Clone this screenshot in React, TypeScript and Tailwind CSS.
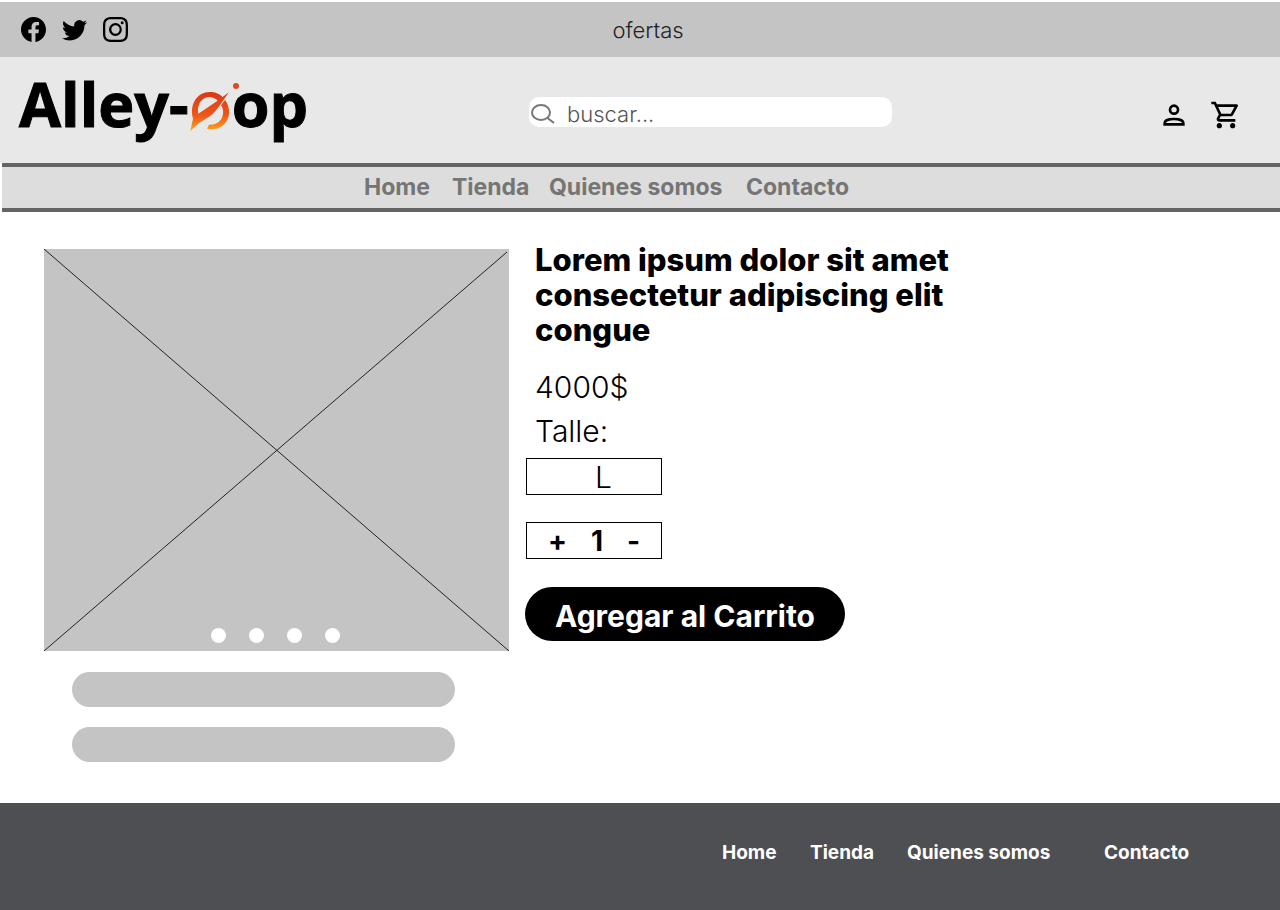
import { BsFacebook, BsInstagram, BsTwitter } from "react-icons/bs";
import { MdOutlineShoppingCart } from "react-icons/md";

const links = ["Home", "Tienda", "Quienes somos", "Contacto"];
const slides = [1, 2, 3, 4];

function Logo() {
  return (
    <a
      href="#"
      aria-label="Alley-oop"
      className="flex items-start font-['Open_Sans',sans-serif] text-[61px] leading-[84px] font-bold text-black [-webkit-text-stroke:1px_black]"
    >
      <span>Alley-</span>
      <svg viewBox="12 0 129 180" className="mt-[14px] h-[60px] w-[43px] shrink-0 overflow-visible" aria-hidden="true">
        <defs>
          <linearGradient id="flame" gradientUnits="userSpaceOnUse" x1="0" y1="48" x2="0" y2="166">
            <stop offset="0" stopColor="#dc3614" />
            <stop offset="0.6" stopColor="#f0571a" />
            <stop offset="1" stopColor="#f9a81c" />
          </linearGradient>
        </defs>
        <path
          fill="url(#flame)"
          d="M16 166 L24 128 C12 84 38 48 74 48 C92 48 104 54 113 63 L131 49 C112 78 100 96 84 113 C68 128 40 136 16 166 Z M40 113 L98 74 C86 62 68 60 56 68 C42 78 36 94 40 113 Z"
        />
        <path
          fill="url(#flame)"
          d="M120 72 C138 96 136 128 116 146 C102 159 84 162 66 158 L72 146 C92 146 106 138 112 122 C117 108 114 96 108 88 Z"
        />
        <circle cx="153" cy="30" r="9" fill="#dc4a20" />
      </svg>
      <span>op</span>
    </a>
  );
}

function PersonIcon() {
  return (
    <svg viewBox="0 0 24 24" className="size-8" fill="none" stroke="currentColor" strokeWidth="2" aria-hidden="true">
      <circle cx="12" cy="8" r="3" />
      <path d="M5 19 V18 C5 16 8.500 15 12 15 C15.500 15 19 16 19 18 V19 Z" />
    </svg>
  );
}

export default function App() {
  return (
    <div className="flex min-h-screen flex-col bg-white pt-[2px] font-[Inter,sans-serif] text-black">
      <div className="grid h-[55px] grid-cols-[1fr_auto_1fr] items-center bg-[#c4c4c4] px-[21px]">
        <div className="flex gap-4">
          <a href="#" aria-label="Facebook"><BsFacebook className="size-[25px]" /></a>
          <a href="#" aria-label="Twitter"><BsTwitter className="size-[25px]" /></a>
          <a href="#" aria-label="Instagram"><BsInstagram className="size-[25px]" /></a>
        </div>
        <p className="pt-[2px] pl-4 text-[22px] font-light text-[#222]">ofertas</p>
      </div>

      <header className="flex h-[106px] items-center bg-[#e8e8e8] pr-[38px] pl-[19px]">
        <div className="w-[510px] self-start pt-[5px]"><Logo /></div>
        <label className="mt-1 flex h-[30px] w-[363px] items-center gap-3 rounded-[10px] bg-white px-[2px]">
          <svg viewBox="0 0 24 20" className="mt-1 h-5 w-6 shrink-0" fill="none" stroke="#777" strokeWidth="2" aria-hidden="true">
            <ellipse cx="10" cy="8.500" rx="9" ry="7.500" />
            <path d="M16.500 14 L23 19" />
          </svg>
          <input
            type="search"
            aria-label="buscar"
            placeholder="buscar..."
            className="h-[30px] min-w-0 flex-1 bg-transparent pt-1 text-[22px] font-light outline-none placeholder:text-[#555]"
          />
        </label>
        <div className="mt-[10px] ml-auto flex items-center gap-5">
          <a href="#" aria-label="Mi cuenta"><PersonIcon /></a>
          <a href="#" aria-label="Carrito"><MdOutlineShoppingCart className="size-8" /></a>
        </div>
      </header>

      <nav className="ml-[2px] grid h-[49px] grid-cols-[88px_97px_197px_auto] items-center justify-start border-y-4 border-[#646464] bg-[#ddd] pl-[362px] text-[23px] font-bold text-[#757575]">
        {links.map((l) => <a key={l} href="#" className="whitespace-nowrap">{l}</a>)}
      </nav>

      <main className="flex flex-1 gap-4 px-11 pt-[37px] pb-[41px]">
        <section className="w-[465px] shrink-0">
          <div className="relative h-[402px] bg-[#c4c4c4]">
            <svg className="size-full" viewBox="0 0 465 402" preserveAspectRatio="none" stroke="#222" strokeWidth="1" aria-hidden="true">
              <path d="M0 0 L465 402 M0 402 L463 3" />
            </svg>
            <div className="absolute inset-x-0 bottom-2 flex justify-center gap-[23px] pr-[3px]">
              {slides.map((s) => (
                <button key={s} aria-label={`Imagen ${s}`} className="size-[15px] rounded-full bg-white" />
              ))}
            </div>
          </div>
          <div className="mt-[21px] ml-7 flex w-[383px] flex-col gap-5">
            <div className="h-[35px] rounded-full bg-[#c4c4c4]" />
            <div className="h-[35px] rounded-full bg-[#c4c4c4]" />
          </div>
        </section>

        <section className="flex flex-col items-start">
          <h1 className="-mt-[7px] w-[440px] pl-[10px] text-[31px] leading-[35px] font-extrabold">
            Lorem ipsum dolor sit amet consectetur adipiscing elit congue
          </h1>
          <p className="mt-[18px] pl-[10px] text-[30px] leading-[44px] font-light">4000$</p>
          <label htmlFor="talle" className="pl-[10px] text-[30px] leading-[44px] font-light">Talle:</label>
          <select id="talle" className="mt-[5px] ml-[1px] h-[37px] w-[136px] appearance-none border border-black bg-white pl-[68px] text-[30px] leading-[34px] font-light">
            <option>L</option>
            <option>M</option>
            <option>S</option>
          </select>
          <div className="mt-[27px] ml-[1px] flex h-[37px] w-[136px] items-center justify-center gap-6 border border-black text-[28px] leading-[34px] font-bold">
            <button aria-label="Sumar">+</button>
            <span>1</span>
            <button aria-label="Restar">-</button>
          </div>
          <button className="mt-7 h-[54px] w-[320px] rounded-full bg-black pt-1 text-[30px] font-bold text-white">
            Agregar al Carrito
          </button>
        </section>
      </main>

      <footer className="flex h-[107px] justify-end bg-[#4e4f52] pt-9 pr-[90px]">
        <nav className="grid grid-cols-[88px_97px_197px_86px] text-[19px] leading-[27px] font-bold text-white">
          {links.map((l) => <a key={l} href="#" className="whitespace-nowrap">{l}</a>)}
        </nav>
      </footer>
    </div>
  );
}
